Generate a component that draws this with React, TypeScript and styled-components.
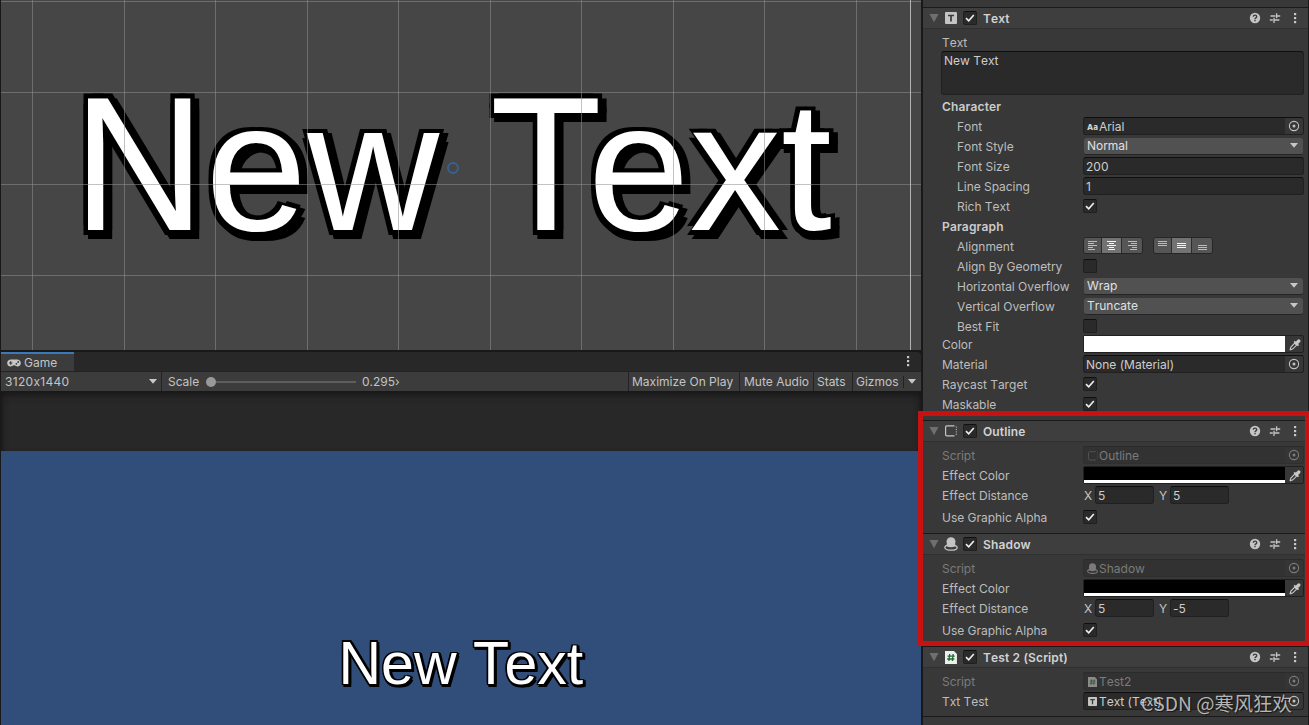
import React from "react";
import styled, { createGlobalStyle, css } from "styled-components";

const GlobalStyle = createGlobalStyle`
  * { box-sizing: border-box; }
  body {
    margin: 0;
    background: #191919;
    font-family: Inter, "Liberation Sans", sans-serif;
    font-size: 12px;
    font-kerning: none;
    font-feature-settings: "calt" 0;
    color: #c4c4c4;
    overflow: hidden;
  }
  svg { display: block; flex: none; }
`;

const Editor = styled.div`
  position: relative;
  display: flex;
  width: 1309px;
  height: 725px;
  overflow: hidden;
`;

const Viewports = styled.main`
  display: flex;
  flex-direction: column;
  width: 921px;
  margin-right: 2px;
  padding-left: 1px;
  background: #191919;
`;

/* ---------- Scene and game canvases ---------- */

const SceneView = styled.section`
  position: relative;
  height: 350px;
  margin-bottom: 2px;
  background: #464646;
  overflow: hidden;
`;

const SceneGrid = styled.svg`
  position: absolute;
  left: 0;
  top: 0;
`;

const CanvasText = styled.div<{ $left: number; $top: number; $size: number; $unit: number }>`
  position: absolute;
  left: ${(p) => p.$left}px;
  top: ${(p) => p.$top}px;
  font-family: "Liberation Sans", Arial, sans-serif;
  font-size: ${(p) => p.$size}px;
  line-height: 1;
  white-space: pre;
  color: #fff;
  ${({ $unit: u }) => css`
    text-shadow:
      ${-u}px ${-u}px #000, ${u}px ${-u}px #000, ${-u}px ${u}px #000, ${u}px ${u}px #000,
      ${2 * u}px 0 #000, 0 ${2 * u}px #000, ${2 * u}px ${2 * u}px #000;
  `}
`;

const Capital = styled.span<{ $kern?: number }>`
  display: inline-block;
  transform: scaleY(1.04);
  transform-origin: 0 84.65%;
  margin-right: ${(p) => p.$kern ?? 0}em;
`;

const Pivot = styled.i`
  position: absolute;
  left: 446px;
  top: 162px;
  width: 12px;
  height: 12px;
  border: 2px solid #39608f;
  border-radius: 50%;
`;

const GameView = styled.section`
  position: relative;
  flex: 1;
  display: flex;
  flex-direction: column;
`;

const Letterbox = styled.div`
  height: 59px;
  background: #282828;
  box-shadow: inset 0 8px 8px -6px #151515, inset 6px 0 6px -5px #171717, inset -6px 0 6px -5px #171717;
`;

const Camera = styled.div`
  flex: 1;
  background: #314d79;
`;

/* ---------- Game tab and toolbar ---------- */

const TabStrip = styled.div`
  display: flex;
  justify-content: space-between;
  height: 19px;
  background: #282828;
  border-radius: 0 4px 0 0;
`;

const Tab = styled.div`
  display: flex;
  align-items: center;
  gap: 3px;
  width: 73px;
  padding: 0 0 0 6px;
  background: #3c3c3c;
  border-top: 2px solid #3a79bb;
`;

const TabMenu = styled.div`
  padding: 3px 11px 0 0;
`;

const Toolbar = styled.div`
  display: flex;
  height: 21px;
  background: #3c3c3c;
  border-top: 1px solid #232323;
  border-bottom: 1px solid #191919;
`;

const ToolItem = styled.div<{ $w: number; $left?: number; $track?: number }>`
  display: flex;
  align-items: center;
  justify-content: space-between;
  width: ${(p) => p.$w}px;
  padding: 0 4px 0 ${(p) => p.$left ?? 3}px;
  border-right: 1px solid #232323;
  letter-spacing: ${(p) => p.$track ?? 0}px;
  white-space: nowrap;
  &:last-child { border-right: 0; padding-right: 5px; }
`;

const ScaleTool = styled.div`
  display: flex;
  align-items: center;
  flex: 1;
  padding: 0 0 0 6px;
  border-right: 1px solid #232323;
`;

const ScaleLabel = styled.span`
  width: 38px;
`;

const Slider = styled.div`
  display: flex;
  align-items: center;
  width: 150px;
  margin-right: 6px;
  &::before {
    content: "";
    width: 10px;
    height: 10px;
    border-radius: 50%;
    background: #999;
  }
  &::after {
    content: "";
    flex: 1;
    height: 2px;
    background: #5e5e5e;
  }
`;

const ShortRule = styled.i`
  width: 1px;
  height: 12px;
  background: #232323;
  margin-left: auto;
  margin-right: 4px;
`;

/* ---------- Inspector ---------- */

const Inspector = styled.aside`
  display: flex;
  flex-direction: column;
  width: 385px;
  background: #3c3c3c;
`;

const InspectorTop = styled.div`
  height: 7px;
  background: #383838;
`;

const Component = styled.section<{ $h: number }>`
  flex: none;
  height: ${(p) => p.$h}px;
  border-top: 1px solid #1a1a1a;
  background: #383838;
`;

const ComponentHeader = styled.header`
  display: flex;
  align-items: center;
  height: 21px;
  padding: 0 11px 0 6px;
  background: #3e3e3e;
  border-bottom: 1px solid #303030;
`;

const HeaderIcon = styled.span`
  display: flex;
  justify-content: center;
  width: 14px;
  margin: 0 5px 0 5px;
`;

const Title = styled.h2`
  flex: 1;
  margin: 1px 0 0 6px;
  font-size: 12px;
  font-weight: 600;
  letter-spacing: 0.15px;
  color: #d2d2d2;
`;

const HeaderActions = styled.div`
  display: flex;
  align-items: center;
  gap: 8px;
  & > :last-child { margin-left: 4px; }
`;

const Properties = styled.div<{ $top?: number }>`
  display: flex;
  flex-direction: column;
  gap: 2px;
  padding: ${(p) => p.$top ?? 4}px 4px 0 19px;
`;

const Row = styled.div<{ $indent?: boolean; $pull?: number }>`
  display: flex;
  height: 18px;
  padding-left: ${(p) => (p.$indent ? 15 : 0)}px;
  margin-top: ${(p) => p.$pull ?? 0}px;
`;

const Label = styled.label<{ $indent?: boolean; $dim?: boolean; $bold?: boolean }>`
  width: ${(p) => (p.$indent ? 126 : 141)}px;
  flex: none;
  line-height: 20px;
  white-space: nowrap;
  letter-spacing: ${(p) => (p.$bold ? 0.16 : -0.03)}px;
  color: ${(p) => (p.$dim ? "#7b7b7b" : p.$bold ? "#cbcbcb" : "#bdbdbd")};
  font-weight: ${(p) => (p.$bold ? 600 : 400)};
`;

const Field = styled.div<{ $dim?: boolean; $w?: number }>`
  display: flex;
  align-items: center;
  width: ${(p) => p.$w ?? 221}px;
  height: 18px;
  padding: 1px 0 0 2px;
  border: 1px solid ${(p) => (p.$dim ? "#2f2f2f" : "#202020")};
  border-top-color: ${(p) => (p.$dim ? "#2b2b2b" : "#0f0f0f")};
  border-radius: 3px;
  background: ${(p) => (p.$dim ? "#323232" : "#2a2a2a")};
  color: ${(p) => (p.$dim ? "#7b7b7b" : "#cdcdcd")};
  white-space: nowrap;
  overflow: hidden;
`;

const FieldIcon = styled.span`
  display: flex;
  width: 13px;
  justify-content: center;
`;

const Picker = styled.span<{ $dim?: boolean }>`
  display: flex;
  align-items: center;
  justify-content: center;
  width: 18px;
  height: 16px;
  margin: -1px 0 0 auto;
  background: ${(p) => (p.$dim ? "#353535" : "#373737")};
  color: ${(p) => (p.$dim ? "#7b7b7b" : "#c2c2c2")};
`;

const Dropdown = styled.div`
  display: flex;
  align-items: center;
  justify-content: space-between;
  width: 219px;
  height: 17px;
  margin: 1px 0 0 1px;
  padding: 0 5px 1px 3px;
  border-radius: 3px;
  border-bottom: 1px solid #242424;
  background: #515151;
  color: #e0e0e0;
`;

const TextArea = styled.div`
  height: 44px;
  margin: -2px 0 0 -1px;
  padding: 0 2px;
  border: 1px solid #202020;
  border-top-color: #0f0f0f;
  border-radius: 3px;
  background: #2a2a2a;
  color: #cdcdcd;
  line-height: 17px;
`;

const Check = styled.span<{ $header?: boolean }>`
  display: flex;
  align-items: center;
  justify-content: center;
  width: 14px;
  height: 14px;
  margin-top: ${(p) => (p.$header ? 0 : 2)}px;
  border: 1px solid #1f1f1f;
  border-top-color: #0f0f0f;
  border-radius: 2px;
  background: #2a2a2a;
`;

const ColorField = styled.div`
  display: flex;
  width: 221px;
  height: 18px;
  border: 1px solid #202020;
  border-radius: 2px;
  background: #373737;
`;

const Swatch = styled.div<{ $color: string }>`
  width: 201px;
  background: ${(p) => p.$color};
  border-bottom: 3px solid #fff;
`;

const Dropper = styled.span`
  display: flex;
  align-items: center;
  justify-content: flex-end;
  flex: 1;
  padding-right: 2px;
`;

const Axis = styled.div`
  display: flex;
  width: 75px;
`;

const AxisName = styled.span`
  width: 12px;
  padding-left: 1px;
  line-height: 20px;
`;

const ButtonGroup = styled.div`
  display: flex;
  height: 17px;
  margin: 0 10px 0 0;
  border: 1px solid #262626;
  border-radius: 3px;
  overflow: hidden;
`;

const AlignButton = styled.span<{ $on?: boolean; $w: number }>`
  display: flex;
  align-items: center;
  justify-content: center;
  width: ${(p) => p.$w}px;
  background: ${(p) => (p.$on ? "#737373" : "#565656")};
  color: ${(p) => (p.$on ? "#f4f4f4" : "#bcbcbc")};
  & + & { border-left: 1px solid #2c2c2c; }
`;

const Highlight = styled.div`
  position: absolute;
  left: 918px;
  top: 411px;
  width: 392px;
  height: 235px;
  border: 5px solid #c81212;
`;

const Watermark = styled.div`
  position: absolute;
  left: 1141px;
  top: 690px;
  font-family: "Noto Sans CJK SC", sans-serif;
  font-size: 19.3px;
  font-weight: 400;
  line-height: 27px;
  white-space: nowrap;
  color: rgba(215, 215, 215, 0.82);
  text-shadow: 1px 1px 1px rgba(0, 0, 0, 0.6);
`;

/* ---------- Icons ---------- */

const Caret = () => (
  <svg width="8" height="5"><path d="M0 0H8L4 4.7Z" fill="#c8c8c8" /></svg>
);
const Foldout = () => (
  <svg width="10" height="10"><path d="M0.5 1H9.5L5 9.2Z" fill="#6f6f6f" /></svg>
);
const Kebab = () => (
  <svg width="4" height="12" fill="#c8c8c8">
    <rect x="1" y="1" width="2.2" height="2.2" /><rect x="1" y="5" width="2.2" height="2.2" /><rect x="1" y="9" width="2.2" height="2.2" />
  </svg>
);
const Tick = () => (
  <svg width="12" height="12"><path d="M2 6.2L4.7 8.8L9.8 2.9" fill="none" stroke="#eee" strokeWidth="1.6" /></svg>
);
const Help = () => (
  <svg width="12" height="12">
    <circle cx="6" cy="6" r="5.2" fill="#c4c4c4" />
    <path d="M4.3 4.8C4.3 2.6 7.7 2.6 7.7 4.7C7.7 5.9 6 5.9 6 7.2M6 8V9.3" fill="none" stroke="#3e3e3e" strokeWidth="1.4" />
  </svg>
);
const Presets = () => (
  <svg width="12" height="12" fill="none" stroke="#c4c4c4" strokeWidth="1.3">
    <path d="M1.5 4H6.5M7.6 1.2V6.2M7.6 4H11.2M0.8 8H3.8M5 5.800V11M5 8H10.4" />
  </svg>
);
const Target = () => (
  <svg width="12" height="12" fill="none" stroke="currentColor">
    <circle cx="6" cy="6" r="4.6" strokeWidth="1.1" /><circle cx="6" cy="6" r="1.5" fill="currentColor" stroke="none" />
  </svg>
);
const Eyedropper = () => (
  <svg width="12" height="13" viewBox="0 0 12 13" fill="none" stroke="#c8c8c8">
    <path d="M1 12L1.900 9L6 4.900L7.900 6.800L3.900 10.800L1 12" strokeWidth="1.100" />
    <path d="M5.200 3.300L9.500 7.600" strokeWidth="1.800" />
    <path d="M7.400 5.400L9.800 3" strokeWidth="3.200" strokeLinecap="round" />
  </svg>
);
const Gamepad = () => (
  <svg width="14" height="8">
    <path d="M4 0.5H10C12.2 0.5 13.8 2 13.8 4C13.8 6 12.4 7.5 10.6 7.5C9.2 7.5 8.6 6.2 7 6.2C5.4 6.2 4.8 7.5 3.4 7.5C1.6 7.5 0.2 6 0.2 4C0.2 2 1.8 0.5 4 0.5Z" fill="#c8c8c8" />
    <path d="M2 4H5.4M3.7 2.3V5.7" stroke="#3c3c3c" strokeWidth="1.2" />
    <circle cx="9.4" cy="4.8" r="0.9" fill="#3c3c3c" /><circle cx="11.2" cy="3" r="0.9" fill="#3c3c3c" />
  </svg>
);
const TextIcon = ({ size = 12 }: { size?: number }) => (
  <svg width={size} height={size} viewBox="0 0 12 12">
    <rect width="12" height="12" rx="1" fill="#c4c4c4" /><path d="M3 3.5H9M6 3.5V9.5" stroke="#3a3a3a" strokeWidth="1.7" />
  </svg>
);
const OutlineIcon = ({ size = 12, color = "#c4c4c4" }: { size?: number; color?: string }) => (
  <svg width={size} height={size} viewBox="0 0 12 12" fill="none" stroke={color}>
    <path d="M9.5 0.8H2Q0.6 0.8 0.6 2V9.5Q0.6 10.8 2 10.8H9.5" strokeWidth="1.2" />
    <path d="M11.3 1.5V11" strokeWidth="1" strokeDasharray="1.2 1.2" />
  </svg>
);
const ShadowIcon = ({ size = 14, color = "#c4c4c4" }: { size?: number; color?: string }) => (
  <svg width={size} height={size} viewBox="0 0 14 14">
    <ellipse cx="7" cy="10.5" rx="6.2" ry="2.7" fill="none" stroke={color} strokeWidth="1.3" />
    <circle cx="7" cy="4.8" r="4.5" fill={color} /><path d="M3 6H11L11.5 9.2Q7 11.5 2.5 9.2Z" fill={color} />
  </svg>
);
const ScriptIcon = ({ size = 13, dim }: { size?: number; dim?: boolean }) => (
  <svg width={size * 0.92} height={size} viewBox="0 0 12 13">
    <path d="M0 0H9L12 3V13H0Z" fill={dim ? "#8b8b8b" : "#eee"} />
    <path d="M4.7 3L3.9 10M8.2 3L7.4 10M2.5 5.2H9.7M2.2 8H9.4" stroke={dim ? "#3c5c42" : "#1f6b30"} strokeWidth="1.3" />
  </svg>
);
const AaIcon = () => (
  <svg width="12" height="8"><text x="0" y="7" fontFamily="Inter" fontWeight="800" fontSize="8" fill="#d0d0d0">Aa</text></svg>
);
const Lines = ({ d }: { d: string }) => (
  <svg width="11" height="12" shapeRendering="crispEdges"><path d={d} stroke="currentColor" fill="none" /></svg>
);

/* ---------- Assembled parts ---------- */

const Checkbox = ({ on, header }: { on?: boolean; header?: boolean }) => (
  <Check $header={header}>{on && <Tick />}</Check>
);

const Header = ({ icon, title }: { icon: React.ReactNode; title: string }) => (
  <ComponentHeader>
    <Foldout />
    <HeaderIcon>{icon}</HeaderIcon>
    <Checkbox on header />
    <Title>{title}</Title>
    <HeaderActions><Help /><Presets /><Kebab /></HeaderActions>
  </ComponentHeader>
);

type PropProps = { label: string; indent?: boolean; dim?: boolean; bold?: boolean; pull?: number; children?: React.ReactNode };
const Prop = ({ label, indent, dim, bold, pull, children }: PropProps) => (
  <Row $indent={indent} $pull={pull}>
    <Label $indent={indent} $dim={dim} $bold={bold}>{label}</Label>
    {children}
  </Row>
);

const ObjectField = ({ icon, text, dim }: { icon?: React.ReactNode; text: string; dim?: boolean }) => (
  <Field $dim={dim}>
    {icon && <FieldIcon>{icon}</FieldIcon>}
    {text}
    <Picker $dim={dim}><Target /></Picker>
  </Field>
);

const ColorPicker = ({ color }: { color: string }) => (
  <ColorField><Swatch $color={color} /><Dropper><Eyedropper /></Dropper></ColorField>
);

const Select = ({ value }: { value: string }) => <Dropdown>{value}<Caret /></Dropdown>;

const EffectComponent = ({ icon, small, name, y }: { icon: React.ReactNode; small: React.ReactNode; name: string; y: string }) => (
  <Component $h={113}>
    <Header icon={icon} title={name} />
    <Properties>
      <Prop label="Script" dim><ObjectField icon={small} text={name} dim /></Prop>
      <Prop label="Effect Color"><ColorPicker color="#000" /></Prop>
      <Prop label="Effect Distance">
        <Axis><AxisName>X</AxisName><Field $w={59}>5</Field></Axis>
        <Axis><AxisName>Y</AxisName><Field $w={59}>{y}</Field></Axis>
      </Prop>
      <Prop label="Use Graphic Alpha" pull={2}><Checkbox on /></Prop>
    </Properties>
  </Component>
);

const SampleText = () => (
  <><Capital>N</Capital>ew <Capital $kern={-0.077}>T</Capital>ext</>
);

const gridX = [31, 123, 214, 306, 397, 489, 580, 672, 763, 855];
const gridY = [1, 92, 184, 275];

export default function App() {
  return (
    <Editor>
      <GlobalStyle />
      <Viewports>
        <SceneView>
          <CanvasText $left={72} $top={75} $size={183} $unit={4.5}><SampleText /></CanvasText>
          <SceneGrid width="920" height="350" shapeRendering="crispEdges" stroke="#909090" strokeOpacity="0.55">
            {gridX.map((x) => <line key={x} x1={x + 0.5} x2={x + 0.5} y1="0" y2="350" />)}
            {gridY.map((y) => <line key={y} x1="0" x2="920" y1={y + 0.5} y2={y + 0.5} />)}
            <line x1="909.5" x2="909.5" y1="0" y2="350" stroke="#b4b4b4" strokeOpacity="1" />
          </SceneGrid>
          <Pivot />
        </SceneView>
        <TabStrip>
          <Tab><Gamepad />Game</Tab>
          <TabMenu><Kebab /></TabMenu>
        </TabStrip>
        <Toolbar>
          <ToolItem $w={161} $left={4} $track={0.3}>3120x1440<Caret /></ToolItem>
          <ScaleTool><ScaleLabel>Scale</ScaleLabel><Slider />0.295›</ScaleTool>
          <ToolItem $w={111}>Maximize On Play</ToolItem>
          <ToolItem $w={74} $left={4}>Mute Audio</ToolItem>
          <ToolItem $w={39}>Stats</ToolItem>
          <ToolItem $w={68}>Gizmos<ShortRule /><Caret /></ToolItem>
        </Toolbar>
        <GameView>
          <Letterbox />
          <Camera />
          <CanvasText $left={337.5} $top={243} $size={59} $unit={1.475}><SampleText /></CanvasText>
        </GameView>
      </Viewports>

      <Inspector>
        <InspectorTop />
        <Component $h={413}>
          <Header icon={<TextIcon />} title="Text" />
          <Properties>
            <Prop label="Text" />
            <TextArea>New Text</TextArea>
            <Prop label="Character" bold />
            <Prop label="Font" indent><ObjectField icon={<AaIcon />} text="Arial" /></Prop>
            <Prop label="Font Style" indent><Select value="Normal" /></Prop>
            <Prop label="Font Size" indent><Field>200</Field></Prop>
            <Prop label="Line Spacing" indent><Field>1</Field></Prop>
            <Prop label="Rich Text" indent><Checkbox on /></Prop>
            <Prop label="Paragraph" bold />
            <Prop label="Alignment" indent>
              <ButtonGroup>
                <AlignButton $w={17}><Lines d="M1 1.5H10M1 3.5H7M1 5.5H10M1 7.5H6M1 9.5H8" /></AlignButton>
                <AlignButton $on $w={20}><Lines d="M1 1.5H10M3 3.5H8M1 5.5H10M3 7.5H8M2 9.5H9" /></AlignButton>
                <AlignButton $w={21}><Lines d="M1 1.5H10M4 3.5H10M1 5.5H10M5 7.5H10M3 9.5H10" /></AlignButton>
              </ButtonGroup>
              <ButtonGroup>
                <AlignButton $w={17}><Lines d="M1 1.5H10M1 3.5H10M1 5.5H10" /></AlignButton>
                <AlignButton $on $w={20}><Lines d="M1 3.5H10M1 5.5H10M1 7.5H10" /></AlignButton>
                <AlignButton $w={21}><Lines d="M1 5.5H10M1 7.5H10M1 9.5H10" /></AlignButton>
              </ButtonGroup>
            </Prop>
            <Prop label="Align By Geometry" indent><Checkbox /></Prop>
            <Prop label="Horizontal Overflow" indent><Select value="Wrap" /></Prop>
            <Prop label="Vertical Overflow" indent><Select value="Truncate" /></Prop>
            <Prop label="Best Fit" indent><Checkbox /></Prop>
            <Prop label="Color" pull={-2}><ColorPicker color="#fff" /></Prop>
            <Prop label="Material"><ObjectField text="None (Material)" /></Prop>
            <Prop label="Raycast Target"><Checkbox on /></Prop>
            <Prop label="Maskable"><Checkbox on /></Prop>
          </Properties>
        </Component>
        <EffectComponent icon={<OutlineIcon />} small={<OutlineIcon size={10} color="#505050" />} name="Outline" y="5" />
        <EffectComponent icon={<ShadowIcon />} small={<ShadowIcon size={11} color="#7b7b7b" />} name="Shadow" y="-5" />
        <Component $h={70}>
          <Header icon={<ScriptIcon />} title="Test 2 (Script)" />
          <Properties>
            <Prop label="Script" dim><ObjectField icon={<ScriptIcon size={10} dim />} text="Test2" dim /></Prop>
            <Prop label="Txt Test"><ObjectField icon={<TextIcon size={9} />} text="Text (Text)" /></Prop>
          </Properties>
        </Component>
        <Component $h={9} />
      </Inspector>
      <Highlight />
      <Watermark>CSDN @寒风狂欢</Watermark>
    </Editor>
  );
}
